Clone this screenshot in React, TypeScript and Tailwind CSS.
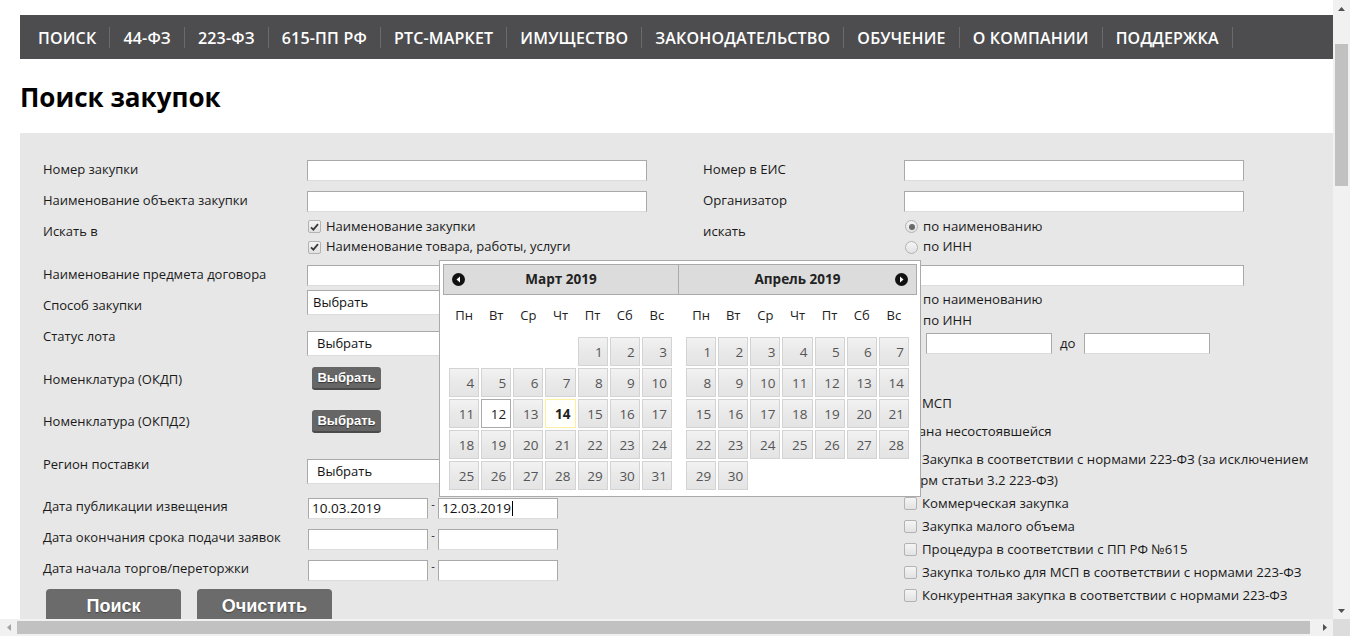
import React from 'react';

const navItems = ['ПОИСК', '44-ФЗ', '223-ФЗ', '615-ПП РФ', 'РТС-МАРКЕТ', 'ИМУЩЕСТВО', 'ЗАКОНОДАТЕЛЬСТВО', 'ОБУЧЕНИЕ', 'О КОМПАНИИ', 'ПОДДЕРЖКА'];
const weekDays = ['Пн', 'Вт', 'Ср', 'Чт', 'Пт', 'Сб', 'Вс'];

function Box({ checked }: { checked?: boolean }) {
  return (
    <span className="inline-flex h-[13px] w-[13px] shrink-0 items-center justify-center rounded-[2px] border border-[#b3b3b3] bg-linear-to-b from-[#f5f5f5] to-[#e2e2e2]">
      {checked && (
        <svg width="9" height="8" viewBox="0 0 9 8">
          <path d="M1 4.3 L3.4 6.6 L8 1.2" fill="none" stroke="#3a3a3a" strokeWidth="1.8" />
        </svg>
      )}
    </span>
  );
}

function Radio({ on }: { on?: boolean }) {
  return (
    <span className="inline-flex h-[13px] w-[13px] shrink-0 items-center justify-center rounded-full border border-[#b3b3b3] bg-linear-to-b from-[#f5f5f5] to-[#e2e2e2]">
      {on && <span className="h-[6px] w-[6px] rounded-full bg-[#6a6a6a]" />}
    </span>
  );
}

function Field({ className, value, caret }: { className: string; value?: string; caret?: boolean }) {
  return (
    <div className={`flex h-[21px] items-center border border-[#a9a9a9] border-b-[#dcdcdc] bg-white pl-[3px] text-[13.5px] text-[#111] ${className}`}>
      {value}
      {caret && <span className="ml-px h-[15px] w-px bg-black" />}
    </div>
  );
}

function Select({ className }: { className: string }) {
  return (
    <div className={`flex h-[25px] w-[340px] items-center border border-[#a9a9a9] border-b-[#dcdcdc] bg-white text-[13px] text-[#111] ${className}`}>
      Выбрать
    </div>
  );
}

function SmallButton() {
  return (
    <div className="ml-[5px] flex h-[23px] w-[69px] items-center justify-center rounded-[3px] border-b-2 border-[#4a4a4a] bg-[#666] font-['Liberation_Sans',Arial,sans-serif] text-[13px] font-bold text-white [text-shadow:0_1px_1px_#333]">
      Выбрать
    </div>
  );
}

function Row({ label, className, labelClass = '', children, wide = false }: { label?: string; className: string; labelClass?: string; children?: React.ReactNode; wide?: boolean }) {
  return (
    <div className={`flex ${className}`}>
      <div className={`${wide ? 'w-[201px]' : 'w-[264px]'} shrink-0 leading-[18px] ${labelClass}`}>{label}</div>
      <div>{children}</div>
    </div>
  );
}

function DateRange({ from, to, caret }: { from?: string; to?: string; caret?: boolean }) {
  return (
    <div className="flex items-start">
      <Field className="ml-px w-[120px]" value={from} />
      <span className="w-[10px] text-center text-[11px] leading-[12px]">-</span>
      <Field className="w-[120px]" value={to} caret={caret} />
    </div>
  );
}

function Cell({ day, kind }: { day?: number; kind?: 'active' | 'today' }) {
  if (!day) return <div />;
  const look =
    kind === 'active'
      ? 'border-[#aaa] bg-white text-[#212121]'
      : kind === 'today'
        ? 'border-[#fcefa1] bg-[#fffffb] font-bold text-[#222]'
        : 'border-[#d3d3d3] bg-linear-to-b from-[#f2f2f2] via-[#e9e9e9] to-[#e4e4e4] text-[#555]';
  return <div className={`flex h-[29px] items-center justify-end border pt-[1px] pr-[4px] text-[13.5px] ${look}`}>{day}</div>;
}

function Month({ title, lead, days, prev, next, marks }: { title: string; lead: number; days: number; prev?: boolean; next?: boolean; marks?: Record<number, 'active' | 'today'> }) {
  const cells: (number | undefined)[] = [...Array(lead).fill(undefined), ...Array.from({ length: days }, (_, i) => i + 1)];
  return (
    <div className={prev ? 'w-[236px]' : 'w-[238px]'}>
      <div className={`relative flex h-[31px] items-center justify-center border border-[#aaa] bg-[#dcdcdc] text-[13.5px] font-bold text-[#222] ${next ? 'border-l-0' : ''}`}>
        {prev && (
          <svg className="absolute left-[8px] top-[8px]" width="13" height="13" viewBox="0 0 13 13">
            <circle cx="6.5" cy="6.5" r="6.5" fill="#111" />
            <path d="M8 3.5 L4.5 6.5 L8 9.5 Z" fill="#fff" />
          </svg>
        )}
        {next && (
          <svg className="absolute right-[8px] top-[8px]" width="13" height="13" viewBox="0 0 13 13">
            <circle cx="6.5" cy="6.5" r="6.5" fill="#111" />
            <path d="M5 3.5 L8.5 6.5 L5 9.5 Z" fill="#fff" />
          </svg>
        )}
        {title}
      </div>
      <div className={prev ? 'pl-[6px]' : 'pl-[7px]'}>
        <div className="mt-[10px] grid w-[223px] grid-cols-7 gap-x-[2px]">
          {weekDays.map((d) => (
            <div key={d} className="h-[20px] text-center text-[13px] leading-[20px] text-[#222]">{d}</div>
          ))}
        </div>
        <div className="mt-[12px] grid w-[223px] grid-cols-7 gap-x-[2px] gap-y-[2px]">
          {cells.map((d, i) => (
            <Cell key={i} day={d} kind={d ? marks?.[d] : undefined} />
          ))}
        </div>
      </div>
    </div>
  );
}

function Calendar() {
  return (
    <div className="absolute left-[439px] top-[260px] z-10 flex h-[237px] w-[482px] border border-[#aaa] bg-white p-[3px]">
      <Month title="Март 2019" lead={4} days={31} prev marks={{ 12: 'active', 14: 'today' }} />
      <Month title="Апрель 2019" lead={0} days={30} next />
    </div>
  );
}

function CheckLine({ text, className = 'h-[23px]' }: { text: string; className?: string }) {
  return (
    <label className={`flex items-center gap-[5px] ${className}`}>
      <Box />
      <span>{text}</span>
    </label>
  );
}

export default function App() {
  return (
    <div className="flex h-[636px] w-[1350px] flex-col overflow-hidden bg-white font-['Open_Sans',sans-serif] text-[13px] text-[#1a1a1a]">
      <div className="flex h-[619px]">
        <div className="relative h-[619px] w-[1333px] overflow-hidden">
          <div className="w-[1340px] pl-[20px] pt-[15px]">
            <nav className="flex h-[44px] items-center bg-[#4d4d4f] pl-[5px] pt-px text-[16px] font-semibold tracking-[0.19px] text-white">
              {navItems.map((item) => (
                <React.Fragment key={item}>
                  <span className="px-[13px]">{item}</span>
                  <span className="h-[21px] w-px bg-[#6a6a6a]" />
                </React.Fragment>
              ))}
            </nav>

            <h1 className="mt-[24px] text-[26px] font-bold leading-[28px] text-black">Поиск закупок</h1>

            <div className="mt-[22px] flex h-[500px] bg-[#e7e7e7] pl-[23px] pt-[27px]">
              <div className="w-[660px] shrink-0">
                <Row label="Номер закупки" className="h-[31px]"><Field className="w-[340px]" /></Row>
                <Row label="Наименование объекта закупки" className="h-[25px]"><Field className="w-[340px]" /></Row>
                <Row label="Искать в" labelClass="pt-[6px]" className="h-[49px]">
                  <label className="flex h-[21px] items-center gap-[5px] pl-px"><Box checked />Наименование закупки</label>
                  <label className="flex h-[20px] items-center gap-[5px] pl-px"><Box checked />Наименование товара, работы, услуги</label>
                </Row>
                <Row label="Наименование предмета договора" className="h-[25px]"><Field className="w-[340px]" /></Row>
                <Row label="Способ закупки" labelClass="pt-[6px]" className="h-[37px]"><Select className="pl-[5px]" /></Row>
                <Row label="Статус лота" className="h-[40px]"><Select className="mt-[4px] pl-[9px]" /></Row>
                <Row label="Номенклатура (ОКДП)" labelClass="pt-[3px]" className="h-[43px]"><SmallButton /></Row>
                <Row label="Номенклатура (ОКПД2)" labelClass="pt-[2px]" className="h-[45px]"><SmallButton /></Row>
                <Row label="Регион поставки" className="h-[43px]"><Select className="mt-[4px] pl-[9px]" /></Row>
                <Row label="Дата публикации извещения" labelClass="-mt-px" className="h-[31px]"><DateRange from="10.03.2019" to="12.03.2019" caret /></Row>
                <Row label="Дата окончания срока подачи заявок" labelClass="-mt-px" className="h-[31px]"><DateRange /></Row>
                <Row label="Дата начала торгов/переторжки" labelClass="-mt-px" className="h-[29px]"><DateRange /></Row>
                <div className="flex gap-[16px] pl-[3px] font-['Liberation_Sans',Arial,sans-serif] text-[18px] font-bold text-white [text-shadow:0_1px_1px_#444]">
                  <div className="flex h-[36px] w-[135px] items-center justify-center rounded-t-[4px] bg-[#6b6b6b] pb-[2px]">Поиск</div>
                  <div className="flex h-[36px] w-[135px] items-center justify-center rounded-t-[4px] bg-[#6b6b6b] pb-[2px]">Очистить</div>
                </div>
              </div>

              <div className="w-[620px] text-[13.2px]">
                <Row wide label="Номер в ЕИС" className="h-[31px]"><Field className="w-[340px]" /></Row>
                <Row wide label="Организатор" className="h-[25px]"><Field className="w-[340px]" /></Row>
                <Row wide label="искать" labelClass="pt-[6px]" className="h-[49px]">
                  <label className="flex h-[21px] items-center gap-[5px] pl-px"><Radio on />по наименованию</label>
                  <label className="flex h-[20px] items-center gap-[5px] pl-px"><Radio />по ИНН</label>
                </Row>
                <Row wide className="h-[25px]"><Field className="w-[340px]" /></Row>
                <Row wide className="h-[43px]">
                  <label className="flex h-[20px] items-center gap-[5px] pl-px"><Radio on />по наименованию</label>
                  <label className="flex h-[21px] items-center gap-[5px] pl-px"><Radio />по ИНН</label>
                </Row>
                <Row wide className="h-[61px]">
                  <div className="flex items-center">
                    <span className="w-[22px]" />
                    <Field className="w-[126px]" />
                    <span className="w-[32px] pl-[8px]">до</span>
                    <Field className="w-[126px]" />
                  </div>
                </Row>
                <Row wide className="h-[28px]"><CheckLine text="МСП" className="h-[20px]" /></Row>
                <Row wide className="h-[27px]"><CheckLine text="Признана несостоявшейся" className="-ml-[44px] h-[20px]" /></Row>
                <Row wide className="h-[43px]">
                  <label className="block w-[416px] leading-[21px]">
                    <span className="mr-[5px] inline-flex align-[-2px]"><Box /></span>
                    Закупка в соответствии с нормами 223-ФЗ (за исключением норм статьи 3.2 223-ФЗ)
                  </label>
                </Row>
                <Row wide className="h-[23px]"><CheckLine text="Коммерческая закупка" /></Row>
                <Row wide className="h-[23px]"><CheckLine text="Закупка малого объема" /></Row>
                <Row wide className="h-[23px]"><CheckLine text="Процедура в соответствии с ПП РФ №615" /></Row>
                <Row wide className="h-[23px]"><CheckLine text="Закупка только для МСП в соответствии с нормами 223-ФЗ" /></Row>
                <Row wide className="h-[23px]"><CheckLine text="Конкурентная закупка в соответствии с нормами 223-ФЗ" /></Row>
              </div>
            </div>
          </div>
          <Calendar />
        </div>

        <div className="flex h-[619px] w-[17px] flex-col bg-[#f1f1f1]">
          <div className="flex h-[17px] items-center justify-center">
            <svg width="7" height="4" viewBox="0 0 7 4"><path d="M0 4 L3.5 0 L7 4 Z" fill="#505050" /></svg>
          </div>
          <div className="mx-[2px] mt-[27px] h-[142px] bg-[#c1c1c1]" />
          <div className="flex-1" />
          <div className="flex h-[17px] items-center justify-center">
            <svg width="7" height="4" viewBox="0 0 7 4"><path d="M0 0 L7 0 L3.5 4 Z" fill="#505050" /></svg>
          </div>
        </div>
      </div>

      <div className="flex h-[17px] bg-[#f1f1f1]">
        <div className="flex w-[17px] items-center justify-center">
          <svg width="4" height="7" viewBox="0 0 4 7"><path d="M4 0 L0 3.5 L4 7 Z" fill="#a3a3a3" /></svg>
        </div>
        <div className="my-[2px] w-[1293px] bg-[#c1c1c1]" />
        <div className="flex-1" />
        <div className="flex w-[17px] items-center justify-center">
          <svg width="4" height="7" viewBox="0 0 4 7"><path d="M0 0 L4 3.5 L0 7 Z" fill="#505050" /></svg>
        </div>
        <div className="w-[17px] bg-[#dcdcdc]" />
      </div>
    </div>
  );
}
